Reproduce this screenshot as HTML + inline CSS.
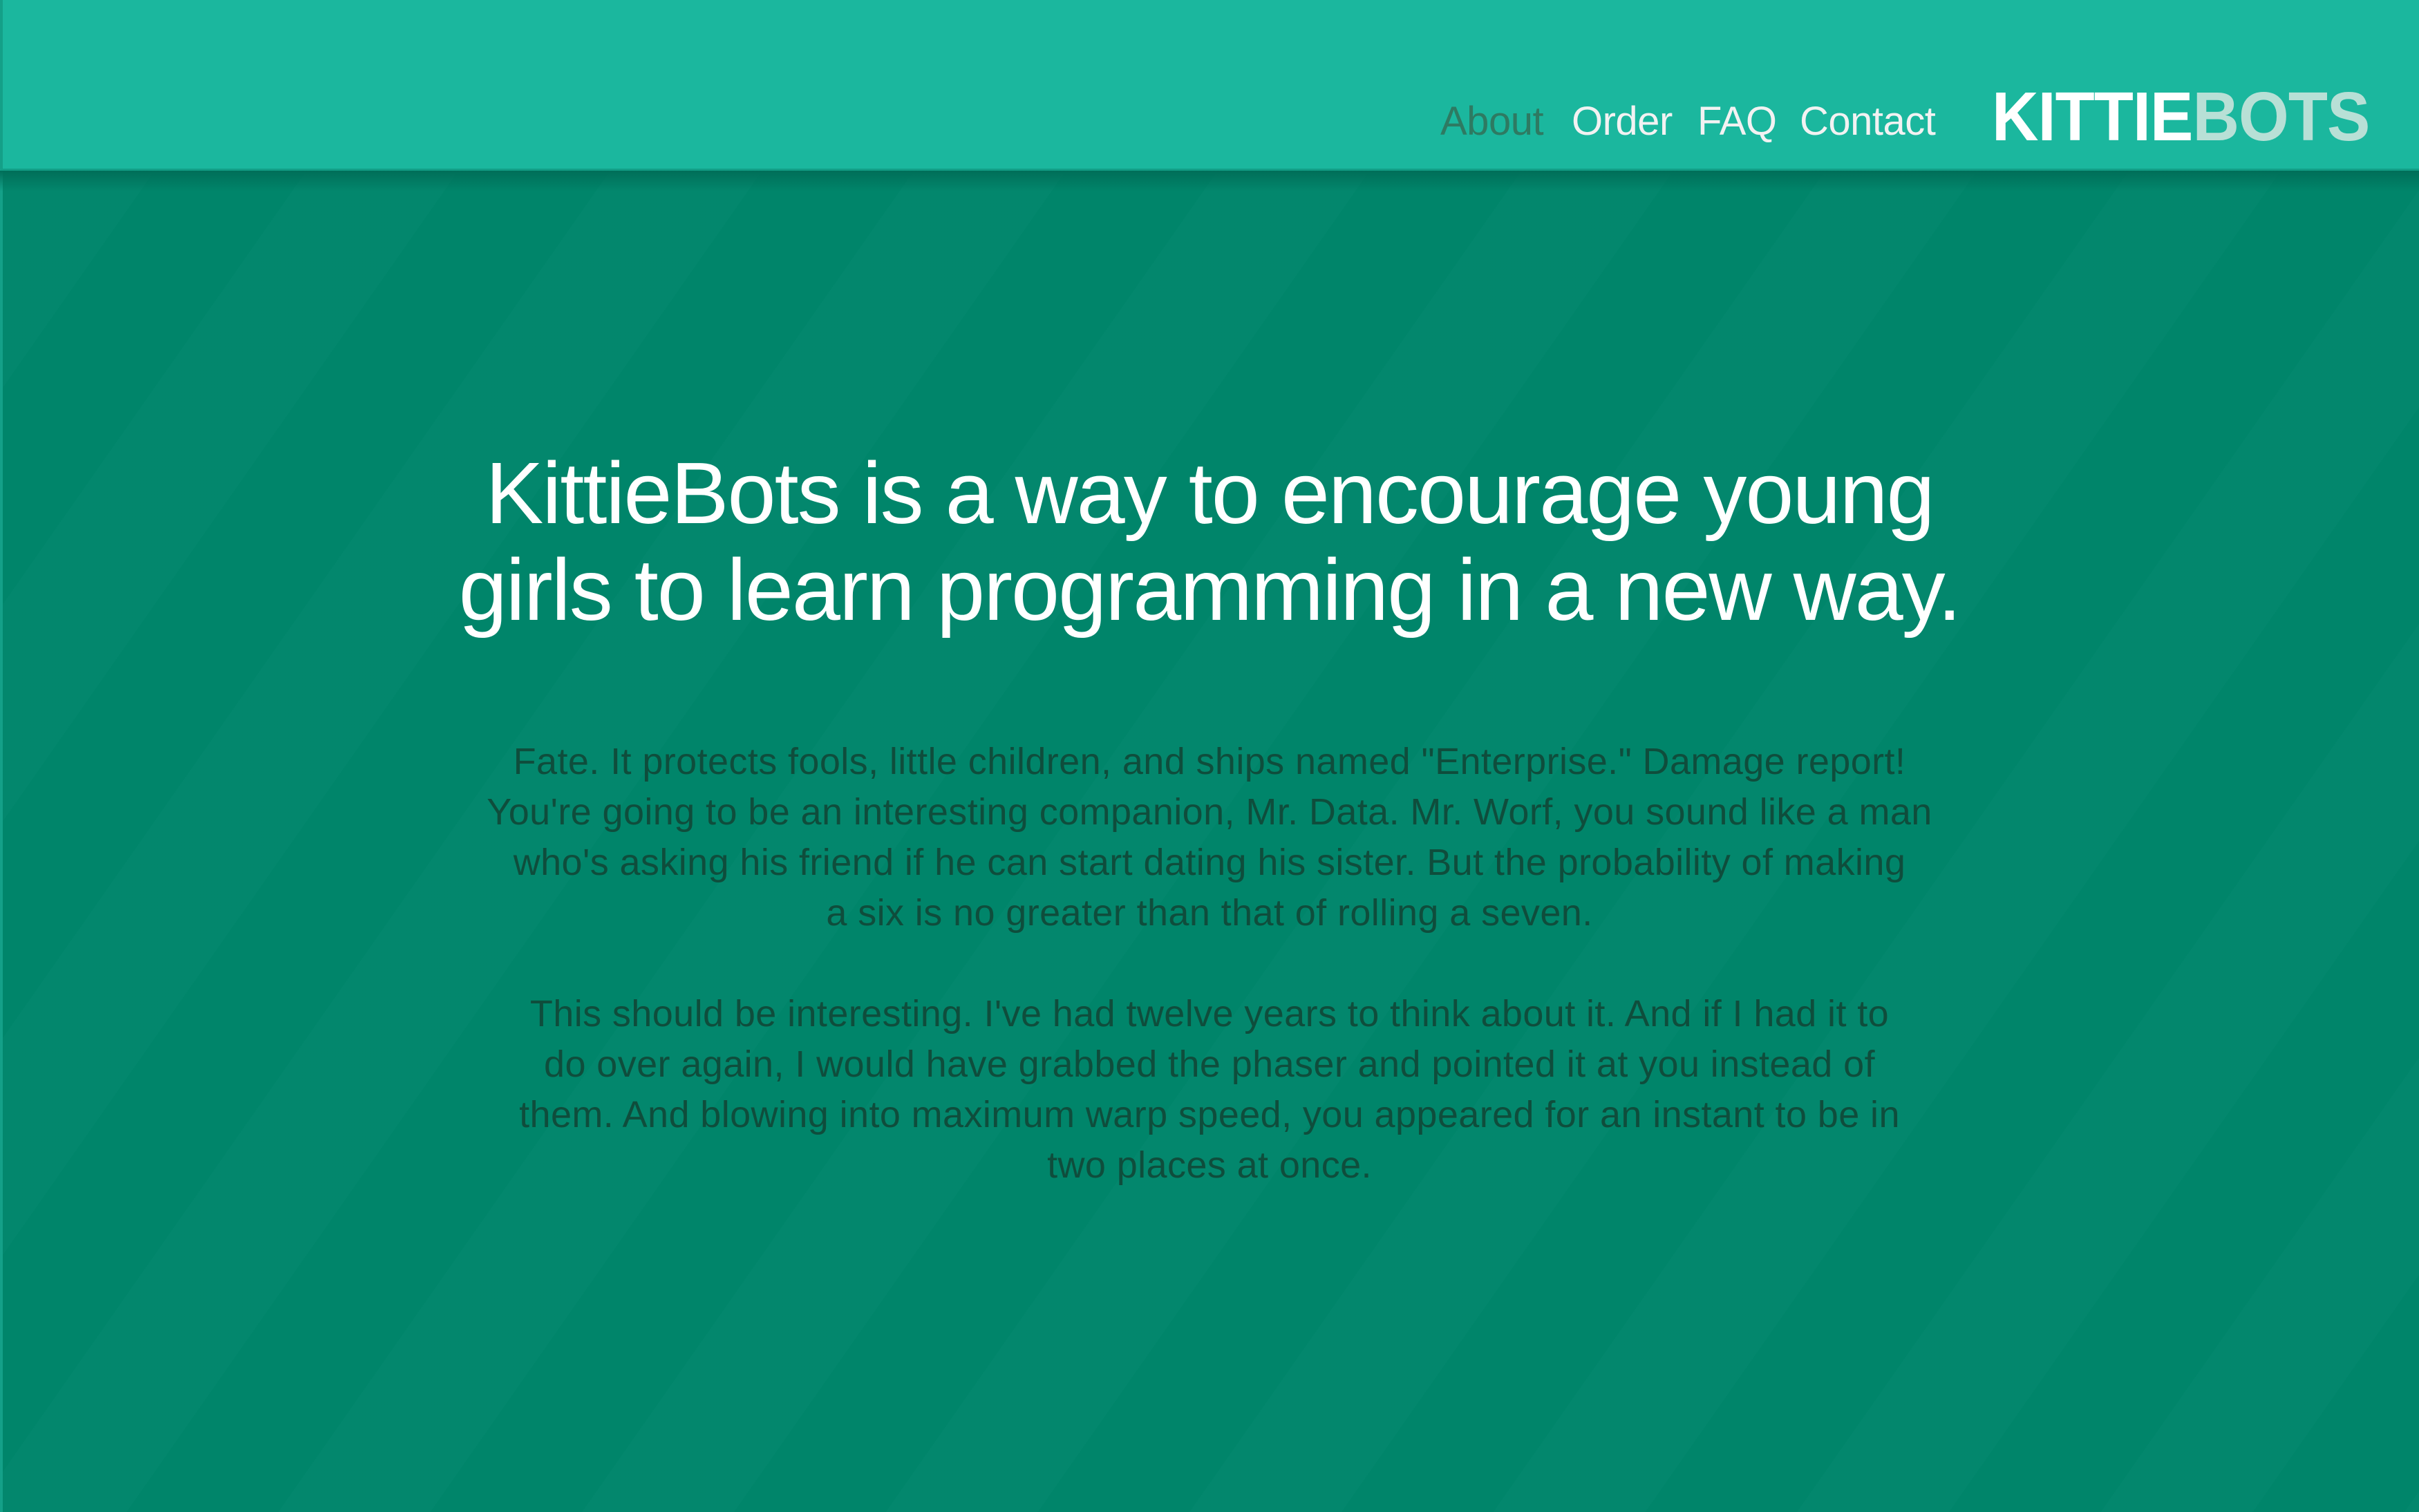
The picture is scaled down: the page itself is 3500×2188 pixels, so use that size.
<!DOCTYPE html>
<html><head><meta charset="utf-8"><style>
html,body{margin:0;padding:0}
body{width:3500px;height:2188px;overflow:hidden;position:relative;background:#00866b;font-family:"Liberation Sans",sans-serif}
.bg{position:absolute;left:0;top:247px;width:3500px;height:1941px;background:
repeating-linear-gradient(125deg,rgba(255,255,255,0.01) 0 180px,rgba(0,0,0,0.006) 180px 360px),#00866b;border-left:4px solid #14a088;box-sizing:border-box}
.shadow{position:absolute;left:0;top:247px;width:3500px;height:30px;background:linear-gradient(#006e58,rgba(0,134,107,0))}
header{position:absolute;left:0;top:0;width:3500px;height:247px;background:#1bb79e;border-left:4px solid #14a088;box-sizing:border-box;border-bottom:3px solid #129e86}
.nav{position:absolute;top:142px;font-size:58px;color:#f2f2f2;white-space:nowrap;letter-spacing:-0.5px}
.logo{position:absolute;left:2878px;top:112px;font-size:100px;font-weight:bold;white-space:nowrap;transform-origin:0 0;transform:scaleX(0.935);letter-spacing:-1px}
h1{position:absolute;left:0;width:3500px;top:644px;margin:0;text-align:center;color:#fff;font-weight:normal;font-size:126px;line-height:140px;letter-spacing:-2px}
p{position:absolute;left:0;width:3500px;margin:0;text-align:center;color:#0f4d3c;font-size:54px;line-height:73px;letter-spacing:0.4px;white-space:nowrap}
</style></head><body>
<div class="bg"></div>
<div class="shadow"></div>
<header>
<span class="nav" style="left:2080px;color:#2e7a62">About</span>
<span class="nav" style="left:2270px">Order</span>
<span class="nav" style="left:2452px">FAQ</span>
<span class="nav" style="left:2600px">Contact</span>
<span class="logo"><span style="color:#fff">KITTIE</span><span style="color:#b8e0d6">BOTS</span></span>
</header>
<h1>KittieBots is a way to encourage young<br>girls to learn programming in a new way.</h1>
<p style="top:1066px">Fate. It protects fools, little children, and ships named "Enterprise." Damage report!<br>You're going to be an interesting companion, Mr. Data. Mr. Worf, you sound like a man<br>who's asking his friend if he can start dating his sister. But the probability of making<br>a six is no greater than that of rolling a seven.</p>
<p style="top:1431px">This should be interesting. I've had twelve years to think about it. And if I had it to<br>do over again, I would have grabbed the phaser and pointed it at you instead of<br>them. And blowing into maximum warp speed, you appeared for an instant to be in<br>two places at once.</p>
</body></html>
